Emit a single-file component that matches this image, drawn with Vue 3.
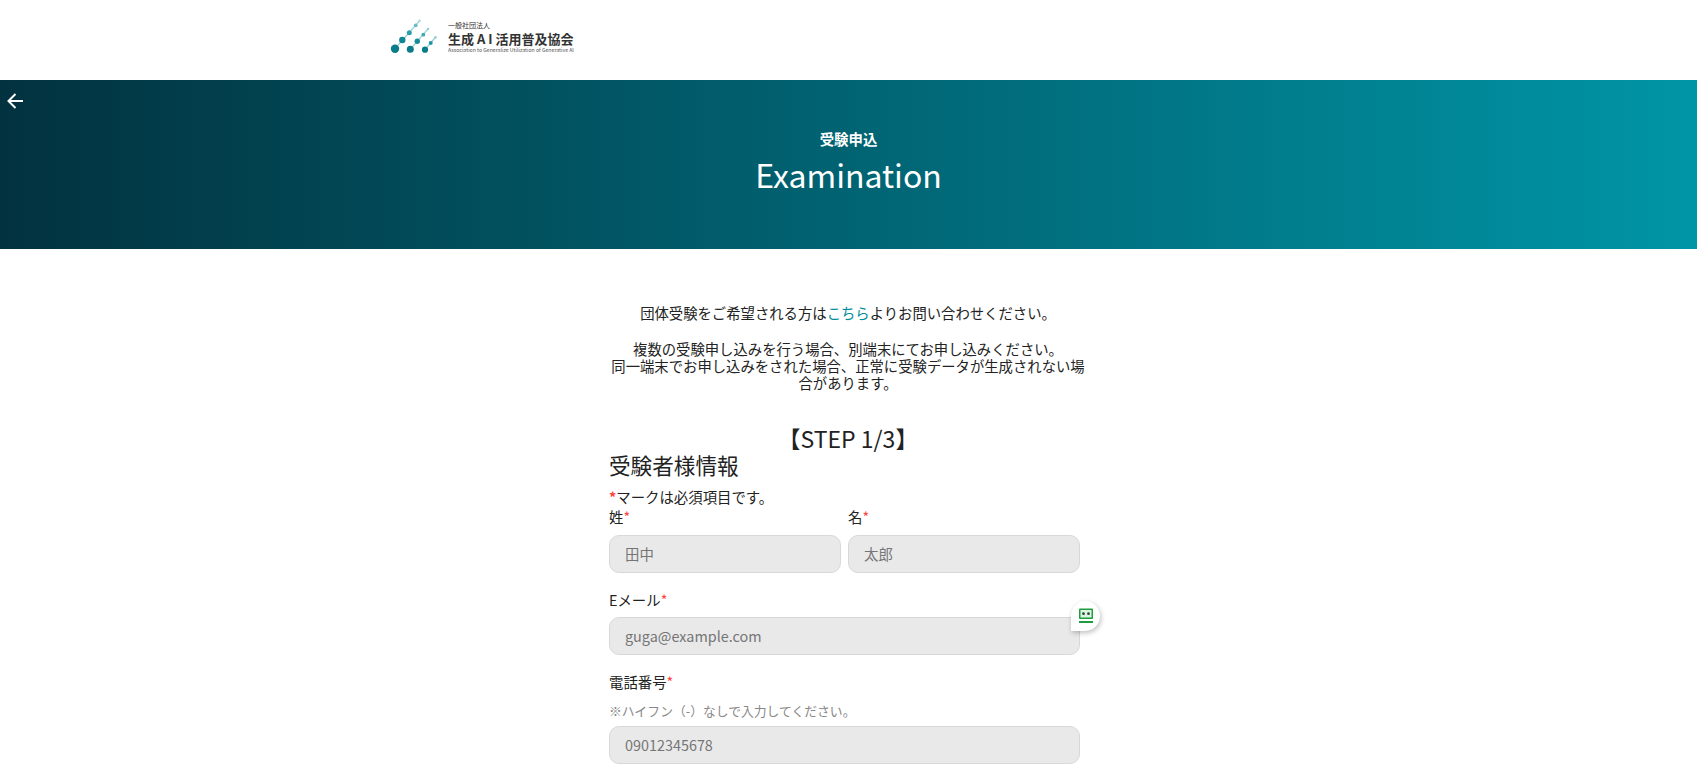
<template>
  <div class="page">
    <header class="siteHeader">
      <div class="logo">
        <svg class="logoMark" width="50" height="42" viewBox="0 0 50 42">
          <g fill="none" stroke-width="1.2">
            <path d="M5 29.7 30 1.3" stroke="#8fcdd3" />
            <path d="M20.3 30.3 38.3 9.7" stroke="#8fcdd3" />
            <path d="M35 30.7 45.7 18" stroke="#8fcdd3" />
          </g>
          <circle cx="5" cy="29.7" r="4.2" fill="#0a7b88" />
          <circle cx="12.3" cy="21" r="3.2" fill="#0e8793" />
          <circle cx="19.3" cy="13.7" r="2.5" fill="#2a9faa" />
          <circle cx="25.7" cy="6.3" r="1.9" fill="#6dbcc4" />
          <circle cx="29.6" cy="1.8" r="1.2" fill="#a9d8dc" />
          <circle cx="20.3" cy="30.3" r="3.5" fill="#0a7b88" />
          <circle cx="27.3" cy="22.3" r="2.7" fill="#128c98" />
          <circle cx="33.3" cy="15.7" r="1.9" fill="#3fa9b3" />
          <circle cx="38" cy="10" r="1.2" fill="#8fcdd3" />
          <circle cx="35" cy="30.7" r="3.1" fill="#0a7b88" />
          <circle cx="40.7" cy="24" r="2" fill="#1a97a2" />
          <circle cx="45.5" cy="18.3" r="1.3" fill="#8fcdd3" />
        </svg>
        <div class="logoText">
          <span class="logoSmall">一般社団法人</span>
          <span class="logoName">生成 A I 活用普及協会</span>
          <span class="logoEn">Association to Generalize Utilization of Generative AI</span>
        </div>
      </div>
    </header>

    <section class="banner">
      <svg class="backArrow" width="16" height="16" viewBox="0 0 16 16">
        <path d="M16 8H1.5M8.5 1 1.5 8l7 7" fill="none" stroke="#fff" stroke-width="2" />
      </svg>
      <p class="bannerSub">受験申込</p>
      <h1 class="bannerTitle">Examination</h1>
    </section>

    <main class="content">
      <p class="intro">団体受験をご希望される方は<span class="link">こちら</span>よりお問い合わせください。</p>
      <p class="intro second">
        複数の受験申し込みを行う場合、別端末にてお申し込みください。<br />
        同一端末でお申し込みをされた場合、正常に受験データが生成されない場合があります。
      </p>

      <h2 class="step">【STEP 1/3】</h2>
      <h3 class="formTitle">受験者様情報</h3>
      <p class="requiredNote"><span class="req bold">*</span>マークは必須項目です。</p>

      <form class="form">
        <div class="nameRow">
          <div class="field" v-for="f in nameFields" :key="f.label">
            <label>{{ f.label }}<span class="req">*</span></label>
            <div class="fakeInput">{{ f.placeholder }}</div>
          </div>
        </div>

        <div class="field">
          <label>Eメール<span class="req">*</span></label>
          <div class="fakeInput">guga@example.com</div>
          <div class="fillBadge">
            <svg width="16" height="16" viewBox="0 0 16 16">
              <rect x="1" y="0.5" width="14" height="10.5" rx="1" fill="#1f9e3d" />
              <rect x="2.5" y="2" width="11" height="7.5" fill="#dff3e3" />
              <circle cx="5.5" cy="5.7" r="1.4" fill="#2a4a35" />
              <circle cx="10.5" cy="5.7" r="1.4" fill="#2a4a35" />
              <rect x="1" y="13" width="14" height="2" fill="#1f9e3d" />
            </svg>
          </div>
        </div>

        <div class="field">
          <label>電話番号<span class="req">*</span></label>
          <p class="hint">※ハイフン（-）なしで入力してください。</p>
          <div class="fakeInput">09012345678</div>
        </div>
      </form>
    </main>
  </div>
</template>

<script setup>
const nameFields = [
  { label: "姓", placeholder: "田中" },
  { label: "名", placeholder: "太郎" },
];
</script>

<style>
html, body {
  margin: 0;
  background: #fff;
  overflow: hidden;
}
</style>

<style scoped>
.page {
  height: 778px;
  overflow: hidden;
  font-family: "Noto Sans CJK JP", "Noto Sans", sans-serif;
  color: #222;
}

.siteHeader {
  height: 80px;
  padding-left: 390px;
  display: flex;
  align-items: center;
}
.logo {
  display: flex;
  align-items: center;
  gap: 8px;
}
.logoMark {
  display: block;
}
.logoText {
  display: flex;
  flex-direction: column;
  margin-bottom: 6px;
  color: #333;
}
.logoSmall {
  font-size: 7px;
  line-height: 8px;
}
.logoName {
  margin-top: 2px;
  font-size: 13px;
  line-height: 16px;
  font-weight: 700;
  white-space: nowrap;
}
.logoEn {
  font-size: 5.2px;
  line-height: 6px;
  color: #555;
  white-space: nowrap;
}

.banner {
  position: relative;
  height: 169px;
  background: linear-gradient(90deg, #02323f 0%, #0095a6 100%);
  color: #fff;
  text-align: center;
  padding-top: 48px;
  box-sizing: border-box;
}
.backArrow {
  position: absolute;
  left: 7px;
  top: 13px;
}
.bannerSub {
  margin: 0;
  font-size: 14.4px;
  line-height: 22px;
  font-weight: 700;
}
.bannerTitle {
  margin: 0;
  font-size: 32px;
  line-height: 48px;
  font-weight: 400;
}

.content {
  width: 478px;
  margin-left: 609px;
  padding-top: 55px;
}
.intro {
  margin: 0;
  font-size: 14.35px;
  line-height: 17px;
  text-align: center;
}
.intro.second {
  margin-top: 19px;
}
.link {
  color: #008c99;
}
.step {
  margin: 33px 0 0;
  font-size: 23px;
  line-height: 29px;
  font-weight: 400;
  text-align: center;
}
.formTitle {
  margin: 0;
  font-size: 21.6px;
  line-height: 24px;
  font-weight: 400;
}
.requiredNote {
  margin: 10px 0 0;
  font-size: 14.4px;
  line-height: 20px;
}
.req {
  color: #f44;
}
.bold {
  font-weight: 700;
}

.form {
  width: 471px;
  display: flex;
  flex-direction: column;
  gap: 17px;
}
.nameRow {
  display: flex;
  gap: 7px;
}
.nameRow .field {
  flex: 1;
}
.nameRow .field label {
  margin-bottom: 8px;
}
.field {
  position: relative;
}
.field label {
  display: block;
  font-size: 14.4px;
  line-height: 20px;
  margin-bottom: 7px;
}
.fakeInput {
  height: 38px;
  box-sizing: border-box;
  padding: 0 15px 2px;
  display: flex;
  align-items: center;
  background: #e9e9ea;
  border: 1px solid #d8d8da;
  border-radius: 10px;
  font-size: 14.4px;
  color: #757575;
}
.hint {
  margin: 9px 0 5px;
  font-size: 12.8px;
  line-height: 20px;
  color: #888;
}
.fillBadge {
  position: absolute;
  right: -20px;
  top: 11px;
  width: 29px;
  height: 30px;
  background: #fff;
  border-radius: 50% 50% 50% 0;
  box-shadow: 1px 2px 5px rgba(0, 0, 0, 0.25);
  display: flex;
  align-items: center;
  justify-content: center;
}
</style>
